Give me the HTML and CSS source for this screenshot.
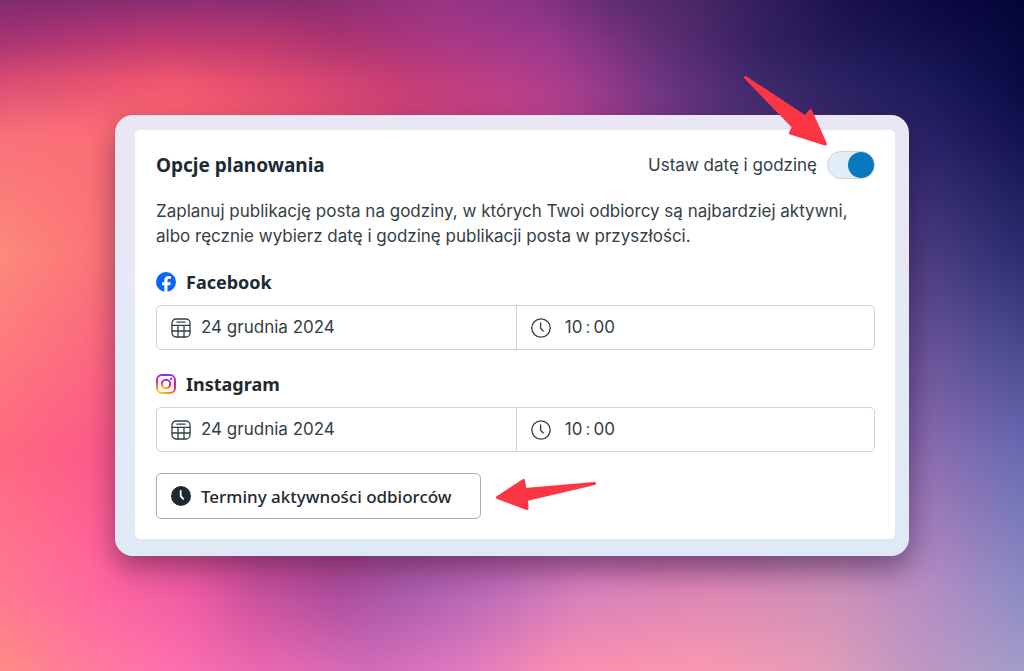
FILE: index.html
```
<!DOCTYPE html>
<html lang="pl">
<head>
<meta charset="UTF-8">
<meta name="viewport" content="width=device-width, initial-scale=1">
<title>Opcje planowania</title>
<link rel="stylesheet" href="styles.css">
</head>
<body>

<div class="backdrop" aria-hidden="true">
  <div class="band band-1"></div>
  <div class="band band-2"></div>
  <div class="band band-3"></div>
  <div class="band band-4"></div>
  <div class="band band-5"></div>
  <div class="band band-6"></div>
  <div class="band band-7"></div>
  <div class="band band-8"></div>
</div>

<!-- shared icons -->
<svg class="sprite" aria-hidden="true">
  <symbol id="calendar" viewBox="0 0 20 20">
    <g fill="none" stroke="currentColor" stroke-width="1.3" stroke-linecap="round">
      <rect x="1" y="1" width="18" height="18" rx="4"/>
      <path d="M6 4.2h8M1 7.3h18M1 13h18M7 7.3V19M13 7.3V19"/>
    </g>
  </symbol>
  <symbol id="clock" viewBox="0 0 20 20">
    <g fill="none" stroke="currentColor" stroke-width="1.3" stroke-linecap="round" stroke-linejoin="round">
      <circle cx="10" cy="10" r="9.2"/>
      <path d="M9.6 5v5.2l2.6 2.8"/>
    </g>
  </symbol>
</svg>

<main class="frame">
  <form class="card">
    <header class="card-header">
      <h1>Opcje planowania</h1>
      <label class="toggle">
        <span>Ustaw datę i godzinę</span>
        <input type="checkbox" role="switch" checked>
      </label>
      <svg class="arrow arrow-toggle" viewBox="0 0 88 74" aria-hidden="true">
        <path d="M2.500 3.500 50.500 53 47.500 59 82.500 70 67.500 36.500 62.500 43Z" fill="#fb3644" stroke="#fb3644" stroke-width="3" stroke-linejoin="round"/>
      </svg>
    </header>

    <p class="intro">Zaplanuj publikację posta na godziny, w których Twoi odbiorcy są najbardziej aktywni, albo ręcznie wybierz datę i godzinę publikacji posta w przyszłości.</p>

    <section class="channel">
      <h2>
        <svg class="icon" viewBox="0 0 20 20" aria-hidden="true">
          <circle cx="10" cy="10" r="10" fill="#0866ff"/>
          <path d="M8.300 20v-6.700H6v-3h2.300V8.700c0-3.200 1.500-4.700 4.600-4.700.6 0 1.500.1 2 .2v2.700c-.3 0-.7-.1-1.200-.1-1.600 0-2.200.6-2.200 2v1.500h3.200l-.5 3h-2.700V20Z" fill="#fff"/>
        </svg>
        Facebook
      </h2>
      <div class="fields">
        <label class="field">
          <svg class="icon"><use href="#calendar"/></svg>
          <input type="text" value="24 grudnia 2024" aria-label="Data publikacji na Facebooku">
        </label>
        <div class="field">
          <svg class="icon"><use href="#clock"/></svg>
          <div class="time">
            <input type="text" value="10" aria-label="Godzina, Facebook"><span>:</span><input type="text" value="00" aria-label="Minuty, Facebook">
          </div>
        </div>
      </div>
    </section>

    <section class="channel">
      <h2>
        <svg class="icon" viewBox="0 0 20 20" aria-hidden="true">
          <defs>
            <linearGradient id="insta" x1="0.3" y1="1" x2="0.7" y2="0">
              <stop offset="0" stop-color="#ffc329"/>
              <stop offset="0.25" stop-color="#fc5b37"/>
              <stop offset="0.5" stop-color="#ee1271"/>
              <stop offset="0.75" stop-color="#c81bb4"/>
              <stop offset="1" stop-color="#8a35ee"/>
            </linearGradient>
          </defs>
          <g fill="none" stroke="url(#insta)" stroke-width="1.900">
            <rect x="1" y="1" width="18" height="18" rx="5"/>
            <circle cx="10" cy="10" r="4.200"/>
          </g>
          <circle cx="15.200" cy="4.800" r="1.200" fill="#c21bbb"/>
        </svg>
        Instagram
      </h2>
      <div class="fields">
        <label class="field">
          <svg class="icon"><use href="#calendar"/></svg>
          <input type="text" value="24 grudnia 2024" aria-label="Data publikacji na Instagramie">
        </label>
        <div class="field">
          <svg class="icon"><use href="#clock"/></svg>
          <div class="time">
            <input type="text" value="10" aria-label="Godzina, Instagram"><span>:</span><input type="text" value="00" aria-label="Minuty, Instagram">
          </div>
        </div>
      </div>
    </section>

    <div class="actions">
      <button type="button" class="best-times">
        <svg class="icon" viewBox="0 0 20 20" aria-hidden="true">
          <circle cx="10" cy="10" r="10" fill="#1c2b33"/>
          <path d="M9.700 4.800v5.400l2.500 2.700" fill="none" stroke="#fff" stroke-width="1.800" stroke-linecap="round" stroke-linejoin="round"/>
        </svg>
        Terminy aktywności odbiorców
      </button>
      <svg class="arrow arrow-button" viewBox="0 0 102 34" aria-hidden="true">
        <path d="M99.500 4.500 30 10.500 28.500 1.500 2.500 18.500 32 29.500 31.500 20.500Z" fill="#fb3644" stroke="#fb3644" stroke-width="3" stroke-linejoin="round"/>
      </svg>
    </div>
  </form>
</main>

</body>
</html>
```
FILE: styles.css
```
* { box-sizing: border-box; }

body {
  margin: 0;
  min-height: 100vh;
  display: flex;
  align-items: center;
  justify-content: center;
  padding: 24px;
  font-family: Inter, "Liberation Sans", sans-serif;
  font-size: 17px;
  line-height: 25px;
  color: #344047;
}

/* colour mesh: each band fades in over the one above it */
.backdrop {
  position: fixed;
  inset: 0;
  z-index: -1;
}
.band {
  position: absolute;
  inset: 0;
}
.band-1 { background: linear-gradient(to right, #802a70, #8e2e74 20%, #8a2c70 30%, #9a3484 43%, #883488 52%, #602c74 60%, #4a2868 68%, #35205f 74%, #1c1250 82%, #0c0842 92%, #04043a); }
.band-2 {
  background: linear-gradient(to right, #a63472, #c03a72 15%, #bc3a70 25%, #ac3470 33%, #a83888 45%, #9a388c 54%, #5c2e74 65%, #33205f 75%, #1c1654 85%, #08083e);
  mask-image: linear-gradient(to bottom, transparent, #000 6%);
}
.band-3 {
  background: linear-gradient(to right, #d84c74, #f0566f 17%, #de4a70 27%, #c83e74 38%, #b83e88 50%, #a43c8e 56%, #6a3480 65%, #422a6c 73%, #2e2464 80%, #1c1a5a 90%, #0a0a46);
  mask-image: linear-gradient(to bottom, transparent 6%, #000 12%);
}
.band-4 {
  background: linear-gradient(to right, #f9707a, #ff6c74 15%, #f45870 28%, #d2447a 40%, #c04490 54%, #5a3480 70%, #342868 84%, #2a2268 90%, #14124f);
  mask-image: linear-gradient(to bottom, transparent 12%, #000 20%);
}
.band-5 {
  background: linear-gradient(to right, #fd8a7c, #fb7078 11%, #c8407a 40%, #5a3078 70%, #4a3c80 91%, #2a2e70);
  mask-image: linear-gradient(to bottom, transparent 20%, #000 38%);
}
.band-6 {
  background: linear-gradient(to right, #ff6880, #fb588a 11%, #c8407a 40%, #5a3078 70%, #8a6cb0 91%, #686ab2);
  mask-image: linear-gradient(to bottom, transparent 38%, #000 67%);
}
.band-7 {
  background: linear-gradient(to right, #ff7890, #ff66a0 10%, #f05ca4 18%, #c8509c 25%, #ac4c9c 33%, #a85cac 40%, #bc6cb8 48%, #d880bc 57%, #dc88b4 70%, #cc90b8 82%, #b08cc4 92%, #8c8cc4);
  mask-image: linear-gradient(to bottom, transparent 67%, #000 88%);
}
.band-8 {
  background: linear-gradient(to right, #ff8c84, #ff7c9c 8%, #ff70ac 16%, #ec68b0 25%, #d06cb8 36%, #e078c0 45%, #fb8eb0 55%, #fb98b0 68%, #e49cb8 80%, #bc98c4 90%, #a49cc8);
  mask-image: linear-gradient(to bottom, transparent 88%, #000);
}

.sprite {
  position: absolute;
  width: 0;
  height: 0;
}

.frame {
  width: 100%;
  max-width: 794px;
  padding: 15px 14px 17px 20px;
  border-radius: 18px;
  background: linear-gradient(to bottom, #e9e6f5, #e4e9f7 50%, #dfe9f5);
  box-shadow: 0 12px 28px rgba(40, 10, 50, 0.45);
}

.card {
  padding: 20px 20px 20px 21px;
  border-radius: 5px;
  background: #fff;
}

.card-header {
  position: relative;
  display: flex;
  align-items: center;
  justify-content: space-between;
  margin-bottom: 19px;
}

h1, h2, .best-times {
  font-family: "Noto Sans", "Liberation Sans", sans-serif;
  color: #1c2b33;
}

h1, h2 { margin: 0; }

h1 {
  font-size: 19px;
  line-height: 30px;
  font-weight: 700;
}

.toggle {
  display: flex;
  align-items: center;
  gap: 10px;
}
.toggle input {
  appearance: none;
  display: flex;
  justify-content: flex-end;
  width: 48px;
  height: 28px;
  margin: 0;
  border: 1px solid #cbd2d9;
  border-radius: 14px;
  background: #e1edf7;
}
.toggle input::before {
  content: "";
  width: 26px;
  height: 26px;
  border-radius: 50%;
  background: #0a78be;
}
.toggle input:not(:checked) { justify-content: flex-start; }

.intro { margin: 0 0 20px; }

.channel { margin-bottom: 21px; }

h2 {
  display: flex;
  align-items: center;
  gap: 10px;
  margin-bottom: 10px;
  font-size: 18px;
  line-height: 26px;
  font-weight: 700;
}

.icon {
  flex: none;
  width: 20px;
  height: 20px;
}

.fields {
  display: grid;
  grid-template-columns: 1fr 1fr;
  border: 1px solid #ced3d7;
  border-radius: 5px;
}
.field {
  display: flex;
  align-items: center;
  gap: 10px;
  min-width: 0;
  height: 43px;
  padding: 0 14px;
}
.field + .field { border-left: 1px solid #ced3d7; }
.field input {
  flex: 1;
  min-width: 0;
  padding: 0;
  border: 0;
  background: none;
  font: inherit;
  color: inherit;
  outline: none;
}

.time {
  display: flex;
  gap: 3px;
}
.time input {
  flex: none;
  width: 22px;
}
.time input:first-child { text-align: right; }
.time span { color: #6b757b; }

.actions {
  display: flex;
  align-items: center;
  gap: 14px;
}

.best-times {
  display: flex;
  align-items: center;
  gap: 10px;
  height: 46px;
  padding: 0 28px 0 14px;
  border: 1px solid #a9b1b7;
  border-radius: 5px;
  background: #fff;
  font-size: 17px;
  font-weight: 500;
  cursor: pointer;
}

.arrow { flex: none; }
.arrow-toggle {
  position: absolute;
  right: 44px;
  bottom: 32px;
  width: 88px;
  height: 74px;
}
.arrow-button {
  width: 102px;
  height: 34px;
}
```
